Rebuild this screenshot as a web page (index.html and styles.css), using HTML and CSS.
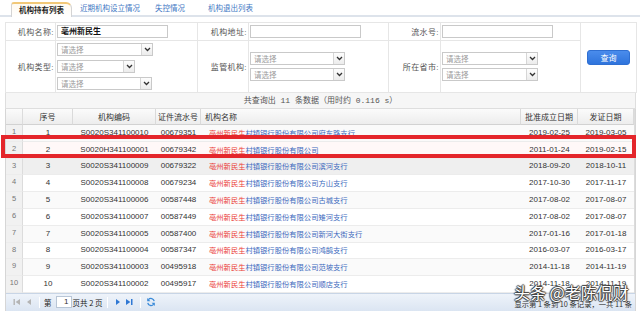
FILE: index.html
```html
<!DOCTYPE html>
<html lang="zh-CN">
<head>
    <meta charset="UTF-8">
    <meta name="viewport" content="width=device-width, initial-scale=1.0">
    <title>机构持有列表</title>
    <link rel="stylesheet" href="styles.css">
</head>
<body>
    <div class="tabs">
        <span class="tab tab-active">机构持有列表</span>
        <span class="tab tab-2">近期机构设立情况</span>
        <span class="tab tab-3">失控情况</span>
        <span class="tab">机构退出列表</span>
    </div>

    <table class="search">
        <tr class="row-1">
            <td class="lbl w-a">机构名称:</td>
            <td class="fld w-b"><div class="text-input">亳州新民生</div></td>
            <td class="lbl w-c">机构地址:</td>
            <td class="fld w-d"><div class="text-input"></div></td>
            <td class="lbl w-e">流水号:</td>
            <td class="fld w-d"><div class="text-input"></div></td>
            <td class="btn-cell w-f" rowspan="2"><button class="btn-query">查询</button></td>
        </tr>
        <tr class="row-2">
            <td class="lbl">机构类型:</td>
            <td class="fld">
                <div class="select-stack">
                    <div class="select s-96"><span>请选择</span><i class="arrow"><svg width="7" height="5" viewBox="0 0 7 5"><path d="M1 1l2.5 2.5L6 1" stroke="#333" stroke-width="1.3" fill="none"/></svg></i></div>
                    <div class="select s-78"><span>请选择</span><i class="arrow"><svg width="7" height="5" viewBox="0 0 7 5"><path d="M1 1l2.5 2.5L6 1" stroke="#333" stroke-width="1.3" fill="none"/></svg></i></div>
                    <div class="select s-95"><span>请选择</span><i class="arrow"><svg width="7" height="5" viewBox="0 0 7 5"><path d="M1 1l2.5 2.5L6 1" stroke="#333" stroke-width="1.3" fill="none"/></svg></i></div>
                </div>
            </td>
            <td class="lbl">监管机构:</td>
            <td class="fld">
                <div class="select-stack pair">
                    <div class="select s-95"><span>请选择</span><i class="arrow"><svg width="7" height="5" viewBox="0 0 7 5"><path d="M1 1l2.5 2.5L6 1" stroke="#333" stroke-width="1.3" fill="none"/></svg></i></div>
                    <div class="select s-95"><span>请选择</span><i class="arrow"><svg width="7" height="5" viewBox="0 0 7 5"><path d="M1 1l2.5 2.5L6 1" stroke="#333" stroke-width="1.3" fill="none"/></svg></i></div>
                </div>
            </td>
            <td class="lbl">所在省市:</td>
            <td class="fld">
                <div class="select-stack pair">
                    <div class="select s-96"><span>请选择</span><i class="arrow"><svg width="7" height="5" viewBox="0 0 7 5"><path d="M1 1l2.5 2.5L6 1" stroke="#333" stroke-width="1.3" fill="none"/></svg></i></div>
                    <div class="select s-96"><span>请选择</span><i class="arrow"><svg width="7" height="5" viewBox="0 0 7 5"><path d="M1 1l2.5 2.5L6 1" stroke="#333" stroke-width="1.3" fill="none"/></svg></i></div>
                </div>
            </td>
        </tr>
    </table>

    <div class="summary">共查询出 11 条数据（用时约 0.116 s）</div>

    <div class="grid">
        <table class="list">
            <tr>
                <th class="rn"></th>
                <th class="w-no">序号</th>
                <th class="w-code">机构编码</th>
                <th class="w-serial">证件流水号</th>
                <th class="w-name name">机构名称</th>
                <th class="w-date">批准成立日期</th>
                <th class="w-date2">发证日期</th>
            </tr>
            <tr>
                <td class="rn">1</td><td>1</td><td>S0020S341100010</td><td>00679351</td>
                <td class="name"><span class="hl">亳州新民生</span>村镇银行股份有限公司府东路支行</td>
                <td>2019-02-25</td><td>2019-03-05</td>
            </tr>
            <tr class="selected">
                <td class="rn">2</td><td>2</td><td>S0020H341100001</td><td>00679342</td>
                <td class="name"><span class="hl">亳州新民生</span>村镇银行股份有限公司</td>
                <td>2011-01-24</td><td>2019-02-15</td>
            </tr>
            <tr class="hover">
                <td class="rn">3</td><td>3</td><td>S0020S341100009</td><td>00679322</td>
                <td class="name"><span class="hl">亳州新民生</span>村镇银行股份有限公司滨河支行</td>
                <td>2018-09-20</td><td>2018-10-11</td>
            </tr>
            <tr>
                <td class="rn">4</td><td>4</td><td>S0020S341100008</td><td>00679234</td>
                <td class="name"><span class="hl">亳州新民生</span>村镇银行股份有限公司方山支行</td>
                <td>2017-10-30</td><td>2017-11-17</td>
            </tr>
            <tr>
                <td class="rn">5</td><td>5</td><td>S0020S341100006</td><td>00587448</td>
                <td class="name"><span class="hl">亳州新民生</span>村镇银行股份有限公司古城支行</td>
                <td>2017-08-02</td><td>2017-08-07</td>
            </tr>
            <tr>
                <td class="rn">6</td><td>6</td><td>S0020S341100007</td><td>00587449</td>
                <td class="name"><span class="hl">亳州新民生</span>村镇银行股份有限公司雉河支行</td>
                <td>2017-08-02</td><td>2017-08-07</td>
            </tr>
            <tr>
                <td class="rn">7</td><td>7</td><td>S0020S341100005</td><td>00587400</td>
                <td class="name"><span class="hl">亳州新民生</span>村镇银行股份有限公司新河大街支行</td>
                <td>2017-01-16</td><td>2017-01-18</td>
            </tr>
            <tr>
                <td class="rn">8</td><td>8</td><td>S0020S341100004</td><td>00587347</td>
                <td class="name"><span class="hl">亳州新民生</span>村镇银行股份有限公司鸿鹄支行</td>
                <td>2016-03-07</td><td>2016-03-17</td>
            </tr>
            <tr>
                <td class="rn">9</td><td>9</td><td>S0020S341100003</td><td>00495918</td>
                <td class="name"><span class="hl">亳州新民生</span>村镇银行股份有限公司范坡支行</td>
                <td>2014-11-18</td><td>2014-11-19</td>
            </tr>
            <tr>
                <td class="rn">10</td><td>10</td><td>S0020S341100002</td><td>00495917</td>
                <td class="name"><span class="hl">亳州新民生</span>村镇银行股份有限公司顺店支行</td>
                <td>2014-11-18</td><td>2014-11-19</td>
            </tr>
        </table>

        <div class="pager">
            <span class="pg-btn"><svg width="8" height="8" viewBox="0 0 8 8"><rect x="0.5" y="1" width="1.4" height="6" fill="#b4b4b4"/><path d="M7 1v6L2.6 4z" fill="#b4b4b4"/></svg></span>
            <span class="pg-btn"><svg width="8" height="8" viewBox="0 0 8 8"><path d="M6 1v6L2 4z" fill="#b4b4b4"/></svg></span>
            <span class="pg-sep"></span>
            <span class="pg-text">第</span>
            <span class="pg-input">1</span>
            <span class="pg-text">页共 2 页</span>
            <span class="pg-sep"></span>
            <span class="pg-btn"><svg width="8" height="8" viewBox="0 0 8 8"><path d="M2 1v6l4-3z" fill="#2f78d4"/></svg></span>
            <span class="pg-btn"><svg width="9" height="8" viewBox="0 0 9 8"><path d="M1 1v6l4.4-3z" fill="#2f78d4"/><rect x="6" y="1" width="1.5" height="6" fill="#2f78d4"/></svg></span>
            <span class="pg-sep"></span>
            <span class="pg-btn"><svg width="10" height="10" viewBox="0 0 10 10"><path d="M8.2 4.2A3.3 3.3 0 0 0 2.4 2.6" stroke="#3a8ad8" stroke-width="1.3" fill="none"/><path d="M1.2 1v3.2h3.2z" fill="#3a8ad8"/><path d="M1.8 5.8A3.3 3.3 0 0 0 7.6 7.4" stroke="#3a8ad8" stroke-width="1.3" fill="none"/><path d="M8.8 9V5.8H5.6z" fill="#3a8ad8"/></svg></span>
            <span class="pg-info">显示第 1 条到 10 条记录，一共 11 条</span>
        </div>
    </div>

    <!-- отметка поверх второй строки и подпись источника -->
    <div class="mark-box"></div>
    <div class="watermark">头条 @老陈侃财</div>
</body>
</html>
```

FILE: styles.css
```css
* {
    margin: 0;
    padding: 0;
    box-sizing: border-box;
}

body {
    font-family: "Liberation Sans", "Noto Sans CJK SC", sans-serif;
    font-size: 8px;
    color: #333;
    background-color: #fff;
    width: 640px;
    height: 311px;
    overflow: hidden;
    position: relative;
}

/* tabs */
.tabs {
    display: flex;
    align-items: flex-end;
    height: 17px;
    padding-left: 11px;
    border-bottom: 2px solid #dde3eb;
    font-size: 7.5px;
}

.tab {
    color: #3f78c4;
    line-height: 13px;
}

.tab-active {
    width: 61px;
    height: 15px;
    margin-bottom: -2px;
    line-height: 13px;
    text-align: center;
    font-weight: bold;
    color: #222;
    background: linear-gradient(#fffaf0, #fff);
    border: 1px solid #d4d4d4;
    border-top: 2px solid #f1c878;
    border-bottom: none;
    border-radius: 3px 6px 0 0;
}

.tab-2 {
    width: 75px;
    margin-left: 8px;
}

.tab-3 {
    width: 53px;
}

/* search form */
.search {
    margin: 5px 0 0 5px;
    width: 631px;
    table-layout: fixed;
    border-collapse: collapse;
    border: 1px solid #d6d6d6;
}

.search td {
    border: 1px solid #e6e6e6;
}

.w-a { width: 50px; }
.w-b { width: 142px; }
.w-c { width: 51px; }
.w-d { width: 140px; }
.w-e { width: 52px; }
.w-f { width: 56px; }

.row-1 td {
    height: 18px;
}

.row-2 td {
    height: 52px;
}

.search .lbl {
    text-align: right;
    color: #555;
    padding-right: 1px;
    letter-spacing: 0.4px;
}

.search .fld {
    padding-left: 1px;
}

.text-input {
    width: 111px;
    height: 13px;
    border: 1px solid #c9c9c9;
    padding-left: 3px;
    line-height: 11px;
    font-size: 8px;
    color: #111;
    font-weight: bold;
}

.select-stack {
    display: flex;
    flex-direction: column;
    gap: 4px;
}

.select-stack.pair {
    gap: 3px;
}

.select {
    display: flex;
    align-items: center;
    height: 13px;
    border: 1px solid #c9c9c9;
    padding-left: 3px;
    color: #9a9a9a;
    font-size: 7.5px;
    background-color: #fff;
}

.s-96 { width: 96px; }
.s-95 { width: 95px; }
.s-78 { width: 78px; }

.arrow {
    margin-left: auto;
    width: 11px;
    height: 11px;
    display: flex;
    align-items: center;
    justify-content: center;
    border-left: 1px solid #d6d6d6;
    background: linear-gradient(#fdfdfd, #ececec);
}

.btn-cell {
    text-align: center;
    vertical-align: middle;
}

.btn-query {
    width: 43px;
    height: 15px;
    border: 1px solid #2f6fd2;
    border-radius: 3px;
    background: linear-gradient(#4a8cec, #2f74dc);
    color: #fff;
    font-family: "Noto Sans CJK SC", sans-serif;
    font-size: 8px;
}

/* summary line */
.summary {
    margin-left: 5px;
    width: 631px;
    height: 16px;
    line-height: 15px;
    text-align: center;
    color: #555;
    background-color: #f6f6f6;
    border: 1px solid #dedede;
    border-top: none;
    font-family: "Liberation Mono", "Noto Sans CJK SC", monospace;
    font-size: 8px;
}

/* grid */
.grid {
    margin-left: 5px;
    width: 631px;
    border: 1px solid #d6d6d6;
    border-top: none;
}

.list {
    width: 628px;
    table-layout: fixed;
    border-collapse: separate;
    border-spacing: 0;
    border-right: 1px solid #dcdcdc;
}

.list th {
    height: 16px;
    font-weight: normal;
    color: #333;
    background: linear-gradient(#fbfbfb, #ededed);
    border-right: 1px solid #dadada;
    border-bottom: 1px solid #d2d2d2;
}

.list td {
    height: 16.8px;
    line-height: 10px;
    text-align: center;
    border-bottom: 1px solid #ececec;
    white-space: nowrap;
    overflow: hidden;
}

.list .rn {
    width: 17px;
    color: #777;
    font-size: 7.5px;
    background-color: #f1f1f1;
    border-right: 1px solid #dcdcdc;
    vertical-align: top;
    padding-top: 2px;
}

.w-no { width: 50px; }
.w-code { width: 83px; }
.w-serial { width: 45px; }
.w-name { width: 320px; }
.w-date { width: 57px; }
.w-date2 { width: 56px; }

.list .name {
    text-align: left;
    padding-left: 4px;
    color: #3b69bd;
    font-family: "Noto Sans CJK SC", sans-serif;
    font-size: 7.3px;
}

.list td.name {
    padding-left: 8px;
}

.list th.name {
    color: #333;
    font-size: 8px;
}

.hl {
    color: #ea3a35;
}

.list tr:nth-child(even) td {
    background-color: #fafafa;
}

.list tr.hover td {
    background-color: #efefef;
}

.list tr.selected td {
    background-color: #fff8f8;
}

.list tr td.rn {
    background-color: #f1f1f1;
}

/* pager */
.pager {
    display: flex;
    align-items: center;
    height: 18px;
    padding-left: 5px;
    background: linear-gradient(#eef3fa, #dbe5f2);
    border-top: 1px solid #c8d5e6;
}

.pg-btn {
    display: flex;
    align-items: center;
    justify-content: center;
    width: 12px;
    height: 12px;
}

.pg-sep {
    width: 1px;
    height: 11px;
    margin: 0 4px;
    background-color: #c5d2e3;
    border-right: 1px solid #fff;
}

.pg-text {
    font-family: "Noto Sans CJK SC", sans-serif;
    font-size: 7.5px;
    color: #222;
}

.pg-input {
    width: 16px;
    height: 12px;
    margin: 0 1px 0 4px;
    padding-right: 2px;
    text-align: right;
    line-height: 10px;
    border: 1px solid #b9c6d6;
    background-color: #fff;
}

.pg-info {
    margin-left: auto;
    margin-right: 3px;
    margin-top: 4px;
    font-family: "Noto Sans CJK SC", sans-serif;
    font-size: 7.3px;
    color: #333;
}

/* overlays */
.mark-box {
    position: absolute;
    left: 1px;
    top: 135px;
    width: 635px;
    height: 23px;
    border: 4px solid #e4262b;
}

.watermark {
    position: absolute;
    left: 514px;
    top: 283px;
    font-family: "Noto Sans CJK SC", sans-serif;
    font-size: 16px;
    line-height: 18px;
    color: #fff;
    text-shadow: 1px 0 1px #333, -1px 0 1px #333, 0 1px 1px #333, 0 -1px 1px #333;
}
```
